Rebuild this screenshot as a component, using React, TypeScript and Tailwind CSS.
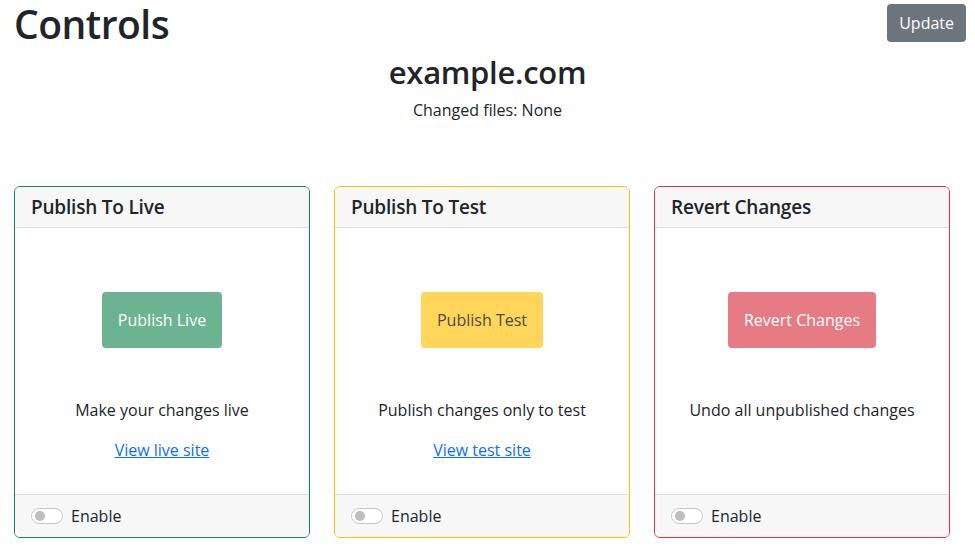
import React from 'react';

type Panel = {
  title: string;
  action: string;
  note: string;
  link?: string;
  border: string;
  button: string;
};

const panels: Panel[] = [
  {
    title: 'Publish To Live',
    action: 'Publish Live',
    note: 'Make your changes live',
    link: 'View live site',
    border: 'border-[#198754]',
    button: 'bg-[#6bb391] text-white',
  },
  {
    title: 'Publish To Test',
    action: 'Publish Test',
    note: 'Publish changes only to test',
    link: 'View test site',
    border: 'border-[#ffc107]',
    button: 'bg-[#ffd65a] text-[#4a4a4a]',
  },
  {
    title: 'Revert Changes',
    action: 'Revert Changes',
    note: 'Undo all unpublished changes',
    border: 'border-[#dc3545]',
    button: 'bg-[#e77b85] text-white',
  },
];

const Toggle = () => (
  <span className="relative inline-block w-[32px] h-[16px] rounded-full border border-[#c8c8c8] bg-white">
    <span className="absolute left-[3px] top-[2px] w-[10px] h-[10px] rounded-full bg-[#bfbfbf]" />
  </span>
);

const PanelCard = ({ panel }: { panel: Panel }) => (
  <div className={`w-[296px] flex flex-col rounded-md border ${panel.border} overflow-hidden`}>
    {/* header */}
    <div className="h-[41px] px-4 flex items-center bg-[#f7f7f7] border-b border-[#dcdcdc]">
      <h5 className="text-[19px] font-semibold leading-6 tracking-[-0.2px]">{panel.title}</h5>
    </div>

    {/* body */}
    <div className="flex-1 flex flex-col items-center bg-white pt-[64px] pb-[32px]">
      <button
        disabled
        className={`px-4 py-4 text-[16px] leading-6 rounded-[4px] ${panel.button}`}
      >
        {panel.action}
      </button>
      <p className="mt-[50px] text-[16px] leading-6">{panel.note}</p>
      {panel.link && (
        <a href="#" className="mt-[16px] text-[16px] leading-6 text-[#0d6efd] underline">
          {panel.link}
        </a>
      )}
    </div>

    {/* footer */}
    <div className="h-[43px] px-4 flex items-center gap-2 bg-[#f7f7f7] border-t border-[#dcdcdc]">
      <Toggle />
      <span className="text-[16px]">Enable</span>
    </div>
  </div>
);

export default function App() {
  return (
    <div
      className="w-[975px] h-[559px] bg-white text-[#212529]"
      style={{ fontFamily: '"Open Sans", sans-serif' }}
    >
      <div className="flex items-start justify-between pt-[2px] pl-[14px] pr-[9px]">
        <h1 className="text-[39px] font-semibold leading-[44px] tracking-[-0.5px]">Controls</h1>
        <button className="mt-[2px] h-[38px] px-3 rounded-[4px] bg-[#6c757d] text-white text-[16px]">
          Update
        </button>
      </div>

      <div className="flex flex-col items-center mt-[6px]">
        <h2 className="text-[31px] font-semibold leading-[40px] tracking-[-0.3px]">example.com</h2>
        <p className="mt-[6px] text-[16px] leading-6">Changed files: None</p>
      </div>

      <div className="flex items-stretch gap-[24px] pl-[14px] mt-[64px]">
        {panels.map((p) => (
          <PanelCard key={p.title} panel={p} />
        ))}
      </div>
    </div>
  );
}
